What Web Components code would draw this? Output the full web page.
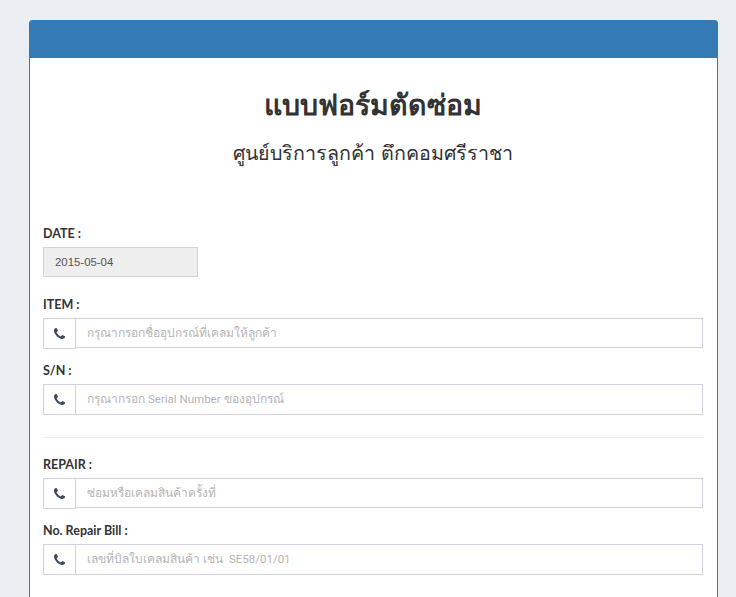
<!DOCTYPE html>
<html>
<head>
<meta charset="utf-8">
<style>
  html, body { margin: 0; height: 597px; overflow: hidden; background: #ebeef3; }
  body { font-family: "Open Sans", "Noto Sans", sans-serif; color: #333; }
</style>
</head>
<body>
<repair-page>
  <form-panel>
    <form-heading title="แบบฟอร์มตัดซ่อม" subtitle="ศูนย์บริการลูกค้า ตึกคอมศรีราชา"></form-heading>
    <date-field label="DATE :" value="2015-05-04"></date-field>
    <icon-field label="ITEM :" placeholder="กรุณากรอกชื่ออุปกรณ์ที่เคลมให้ลูกค้า"></icon-field>
    <icon-field label="S/N :" tall placeholder="กรุณากรอก Serial Number ของอุปกรณ์"></icon-field>
    <form-divider></form-divider>
    <icon-field label="REPAIR :" placeholder="ซ่อมหรือเคลมสินค้าครั้งที่"></icon-field>
    <icon-field label="No. Repair Bill :" tall placeholder="เลขที่บิลใบเคลมสินค้า เช่น  SE58/01/01"></icon-field>
  </form-panel>
</repair-page>
<script>
const labelCss = `
  .label { display: block; height: 20px; line-height: 22px; font-family: Lato, "Noto Sans", sans-serif; font-size: 12.5px; font-weight: 700; color: #333; margin-bottom: 4px; }
`;

class RepairPage extends HTMLElement {
  constructor() {
    super();
    this.attachShadow({ mode: 'open' });
    this.shadowRoot.innerHTML = `
      <style>:host { display: block; padding: 20px 18px 0 29px; }</style>
      <slot></slot>`;
  }
}

class FormPanel extends HTMLElement {
  constructor() {
    super();
    this.attachShadow({ mode: 'open' });
    this.shadowRoot.innerHTML = `
      <style>
        :host { display: block; background: #fff; border: 1px solid #337ab7; border-radius: 3px; height: 600px; }
        .head { height: 37px; background: #337ab7; }
        .body { padding: 0 14px 0 13px; }
      </style>
      <div class="head"></div>
      <div class="body"><slot></slot></div>`;
  }
}

class FormHeading extends HTMLElement {
  constructor() {
    super();
    this.attachShadow({ mode: 'open' });
    this.shadowRoot.innerHTML = `
      <style>
        :host { display: block; text-align: center; padding-top: 26px; height: 165px; box-sizing: border-box; }
        h1 { margin: 0; font-size: 28.5px; line-height: 40px; font-weight: 700; color: #333; }
        h2 { margin: 13px 0 0; font-size: 19.65px; line-height: 32px; font-weight: 400; color: #333; }
      </style>
      <h1>${this.getAttribute('title')}</h1>
      <h2>${this.getAttribute('subtitle')}</h2>`;
  }
}

class DateField extends HTMLElement {
  constructor() {
    super();
    this.attachShadow({ mode: 'open' });
    this.shadowRoot.innerHTML = `
      <style>
        ${labelCss}
        :host { display: block; margin-bottom: 17px; }
        .box { box-sizing: border-box; width: 155px; height: 30px; line-height: 28px; padding-left: 11px;
               background: #eee; border: 1px solid #d2d2de; font-family: "Liberation Sans", sans-serif; font-size: 11.4px; color: #555; }
      </style>
      <span class="label">${this.getAttribute('label')}</span>
      <div class="box">${this.getAttribute('value')}</div>`;
  }
}

class IconField extends HTMLElement {
  constructor() {
    super();
    this.attachShadow({ mode: 'open' });
    // latin runs are a bit smaller than the thai around them
    const text = this.getAttribute('placeholder').replace(/[A-Za-z0-9\/][A-Za-z0-9\/ ]*[A-Za-z0-9\/]/g, m => `<span class="latin">${m}</span>`);
    this.shadowRoot.innerHTML = `
      <style>
        ${labelCss}
        :host { display: block; margin-bottom: 11px; }
        .group { display: flex; align-items: flex-start; }
        .addon { box-sizing: border-box; width: 33px; height: 31px; display: flex; align-items: center; justify-content: center;
                 border: 1px solid #d2d2de; background: #fff; margin-right: -1px; }
        .addon svg { width: 11px; height: 11px; display: block; }
        .input { box-sizing: border-box; flex: 1; height: 30px; line-height: 28px; padding-left: 11px;
                 border: 1px solid #d2d2de; font-family: Roboto, "Noto Sans", sans-serif; font-size: 12px; color: #b5b5b5; white-space: pre; }
        :host([tall]) .input { height: 31px; }
        .latin { font-size: 11.5px; }
      </style>
      <span class="label">${this.getAttribute('label')}</span>
      <div class="group">
        <div class="addon">
          <svg viewBox="0 0 1408 1408"><path fill="#3d4a55" d="M1408 1112q0 27-10 70.500t-21 68.500q-21 50-122 106-94 51-186 51-27 0-53-3.500t-57.500-12.500-47-14.500-55.500-20.500-49-18q-98-35-175-83-127-79-264-216t-216-264q-48-77-83-175-3-9-18-49t-20.500-55.500-14.500-47-12.500-57.500-3.500-53q0-92 51-186 56-101 106-122 25-11 68.500-21t70.500-10q14 0 21 3 18 6 53 76 11 19 30 54t35 63.500 31 53.500q3 4 17.500 25t21.500 35.500 7 28.500q0 20-28.500 50t-62 55-62 53-28.500 46q0 9 5 22.500t8.500 20.500 14 24 11.500 19q76 137 174 235t235 174q2 1 19 11.500t24 14 20.500 8.500 22.500 5q18 0 46-28.500t53-62 55-62 50-28.500q14 0 28.500 7t35.500 21.500 25 17.500q25 15 53.500 31t63.500 35 54 30q70 35 76 53 3 7 3 21z"/></svg>
        </div>
        <div class="input">${text}</div>
      </div>`;
  }
}

class FormDivider extends HTMLElement {
  constructor() {
    super();
    this.attachShadow({ mode: 'open' });
    this.shadowRoot.innerHTML = `
      <style>:host { display: block; height: 1px; background: #eee; margin: 22px 0 16px; }</style>`;
  }
}

customElements.define('repair-page', RepairPage);
customElements.define('form-panel', FormPanel);
customElements.define('form-heading', FormHeading);
customElements.define('date-field', DateField);
customElements.define('icon-field', IconField);
customElements.define('form-divider', FormDivider);
</script>
</body>
</html>
